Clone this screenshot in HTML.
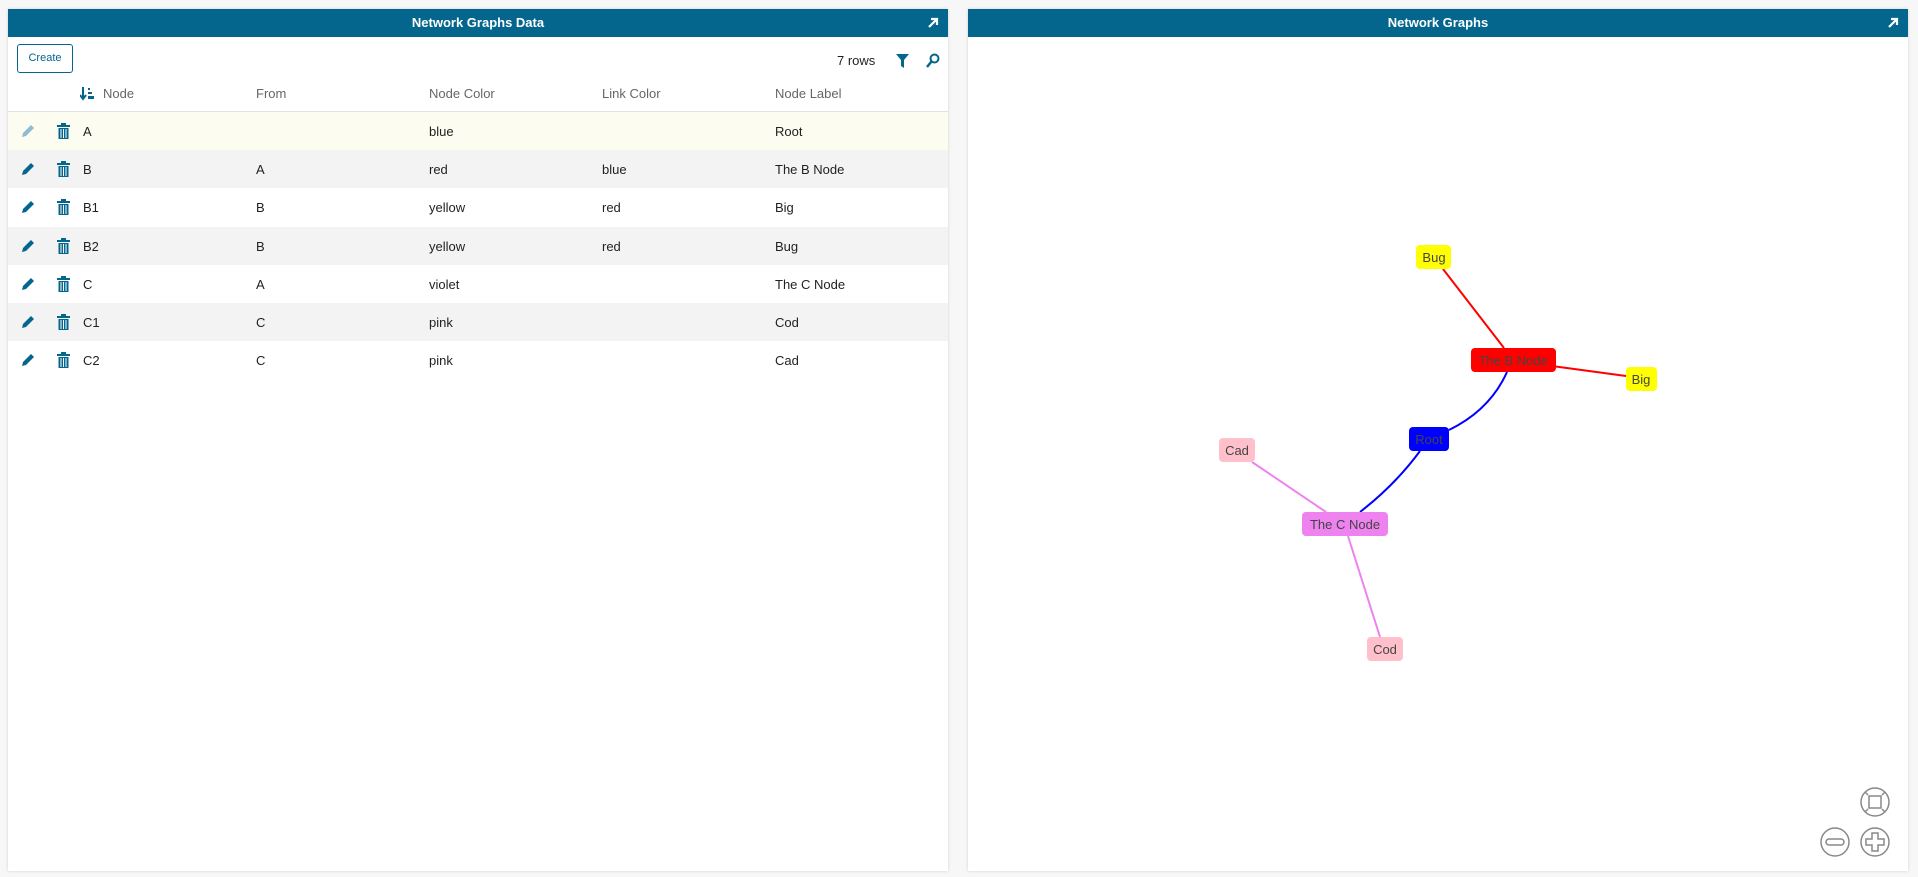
<!DOCTYPE html>
<html><head><meta charset="utf-8"><style>
*{box-sizing:border-box;margin:0;padding:0}
body{width:1918px;height:877px;background:#f7f7f7;font-family:"Liberation Sans",sans-serif;position:relative;overflow:hidden}
.panel{position:absolute;top:9px;height:862px;background:#fff;box-shadow:0 0 3px rgba(0,0,0,.15)}
.hdr{height:28px;background:#05668d;color:#fff;font-weight:bold;font-size:13px;text-align:center;line-height:28px;position:relative}
.hdr svg{position:absolute;right:9px;top:8px}
.btn{position:absolute;left:9px;top:35px;width:56px;height:29px;border:1px solid #05668d;border-radius:3px;font-size:11px;color:#05668d;text-align:center;line-height:27px}
.abs{position:absolute}
.th{position:absolute;top:78px;font-size:13px;color:#666}
.row{position:absolute;left:0;width:940px;height:38px;font-size:13px;color:#222}
.row span{position:absolute;top:12px}
</style></head><body>
<div class="panel" style="left:8px;width:940px">
 <div class="hdr">Network Graphs Data<svg width="12" height="12" viewBox="0 0 12 12"><path d="M2 10L10 2M4 2h6v6" stroke="#fff" stroke-width="2.2" fill="none"/></svg></div>
 <div class="btn">Create</div>
 <div class="abs" style="left:829px;top:44px;font-size:13px;color:#222">7 rows</div>
 <svg class="abs" style="left:888px;top:45px" width="13" height="14" viewBox="0 0 13 14"><path d="M0 0h13L8 6v8L5 12V6z" fill="#05668d"/></svg>
 <svg class="abs" style="left:918px;top:44px" width="14" height="15" viewBox="0 0 14 15"><circle cx="8.5" cy="5.5" r="4" stroke="#05668d" stroke-width="2" fill="none"/><path d="M5.5 8.5L1 14" stroke="#05668d" stroke-width="2.5"/></svg>
 <svg class="abs" style="left:72px;top:78px" width="15" height="14" viewBox="0 0 15 14"><path d="M3 0v11M0 8l3 4 3-4" stroke="#05668d" stroke-width="2" fill="none"/><rect x="8" y="1" width="2" height="2" fill="#05668d"/><rect x="8" y="5" width="4" height="2" fill="#05668d"/><rect x="8" y="9" width="6" height="3" fill="#05668d"/></svg>
 <div class="th" style="left:95px;top:77px">Node</div>
 <div class="th" style="left:248px;top:77px">From</div>
 <div class="th" style="left:421px;top:77px">Node Color</div>
 <div class="th" style="left:594px;top:77px">Link Color</div>
 <div class="th" style="left:767px;top:77px">Node Label</div>
 <div class="abs" style="left:0;top:102px;width:940px;height:1px;background:#e2e2e2"></div>
 <div id="rows"></div>
</div>
<div class="panel" style="left:968px;width:940px">
 <div class="hdr">Network Graphs<svg width="12" height="12" viewBox="0 0 12 12"><path d="M2 10L10 2M4 2h6v6" stroke="#fff" stroke-width="2.2" fill="none"/></svg></div>
</div>
<svg class="abs" style="left:0;top:0" width="1918" height="877" font-family="Liberation Sans,Arial,sans-serif" font-size="13">
 <g fill="none" stroke-width="2">
  <path d="M1443 269L1504 348" stroke="#f00"/>
  <path d="M1552 366L1626 376" stroke="#f00"/>
  <path d="M1507 372Q1490 410 1449 430" stroke="#00f"/>
  <path d="M1420 451Q1395 485 1360 512" stroke="#00f"/>
  <path d="M1252 462L1326 512" stroke="#ee82ee"/>
  <path d="M1348 536L1380 637" stroke="#ee82ee"/>
 </g>
 <g text-anchor="middle" fill="#444">
  <rect x="1416" y="245" width="35" height="24" rx="4" fill="#ff0"/><text x="1434" y="262">Bug</text>
  <rect x="1471" y="348" width="85" height="24" rx="4" fill="#f00"/><text x="1513" y="365">The B Node</text>
  <rect x="1626" y="367" width="31" height="24" rx="4" fill="#ff0"/><text x="1641" y="384">Big</text>
  <rect x="1409" y="427" width="40" height="24" rx="4" fill="#00f"/><text x="1429" y="444">Root</text>
  <rect x="1219" y="438" width="36" height="24" rx="4" fill="#ffc0cb"/><text x="1237" y="455">Cad</text>
  <rect x="1302" y="512" width="86" height="24" rx="4" fill="#ee82ee"/><text x="1345" y="529">The C Node</text>
  <rect x="1367" y="637" width="36" height="24" rx="4" fill="#ffc0cb"/><text x="1385" y="654">Cod</text>
 </g>
 <g fill="none" stroke="#888" stroke-width="1.5">
  <circle cx="1875" cy="802" r="14"/><rect x="1869" y="796" width="12" height="12"/>
  <path d="M1865 792l3 3M1885 792l-3 3M1865 812l3-3M1885 812l-3-3"/>
  <circle cx="1835" cy="842" r="14"/><rect x="1826" y="839" width="18" height="6" rx="3"/>
  <circle cx="1875" cy="842" r="14"/><path d="M1872 833h6v6h6v6h-6v6h-6v-6h-6v-6h6z"/>
 </g>
</svg>
<script>
var d=[["A","","blue","","Root"],["B","A","red","blue","The B Node"],["B1","B","yellow","red","Big"],["B2","B","yellow","red","Bug"],["C","A","violet","","The C Node"],["C1","C","pink","","Cod"],["C2","C","pink","","Cad"]];
var h="";d.forEach(function(r,i){var bg=i==0?"#fcfcf0":(i%2?"#f3f3f3":"#fff");var pc=i==0?"#8fbcd0":"#05668d";
h+='<div class="row" style="top:'+(103+i*38.2)+'px;background:'+bg+'">'+
'<svg style="position:absolute;left:13px;top:12px" width="14" height="14" viewBox="0 0 14 14"><path d="M1 13l1-4 8-8 3 3-8 8z" fill="'+pc+'"/></svg>'+
'<svg style="position:absolute;left:49px;top:11px" width="13" height="16" viewBox="0 0 13 16"><rect x="4" y="0" width="5" height="2" fill="#05668d"/><rect x="0" y="2" width="13" height="2" fill="#05668d"/><path d="M1.5 5h10v11h-10z" fill="#05668d"/><path d="M4 6v9M6.5 6v9M9 6v9" stroke="#fff" stroke-width="1"/></svg>'+
'<span style="left:75px">'+r[0]+'</span><span style="left:248px">'+r[1]+'</span><span style="left:421px">'+r[2]+'</span><span style="left:594px">'+r[3]+'</span><span style="left:767px">'+r[4]+'</span></div>';});
document.getElementById("rows").innerHTML=h;
</script>
</body></html>
